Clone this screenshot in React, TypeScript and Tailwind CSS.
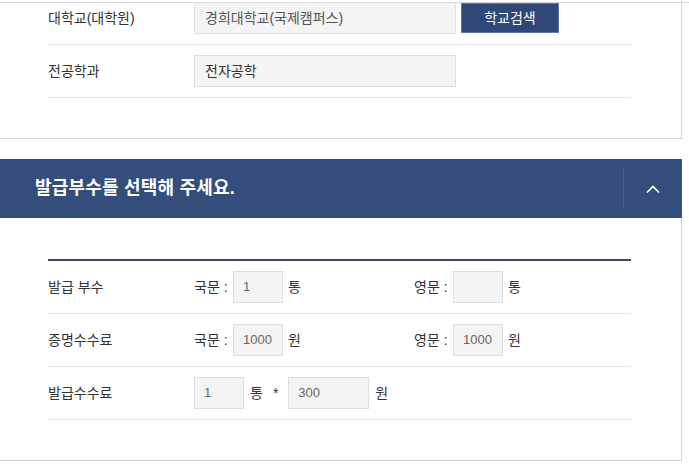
import React from 'react';

const font = { fontFamily: '"Liberation Sans", "Noto Sans CJK KR", sans-serif' };

const Field: React.FC<{ value?: string; w: string; dark?: boolean }> = ({ value, w, dark }) => (
    <div
        className={`${w} h-[32px] flex items-center pl-[9px] bg-[#f4f4f4] border border-[#dedede] text-[13px] ${dark ? 'text-[#333]' : 'text-[#666]'}`}
    >
        {value}
    </div>
);

const Row: React.FC<{ label: string; first?: boolean; children: React.ReactNode }> = ({ label, first, children }) => (
    <div className={`flex items-center border-b border-[#e6e6e6] ${first ? 'pt-[2px] pb-[10px]' : 'py-[10px]'}`}>
        <div className="w-[146px] text-[14px] text-[#333] leading-none">{label}</div>
        <div className="flex items-center text-[14px] text-[#333]">{children}</div>
    </div>
);

export default function App() {
    return (
        <div className="relative w-[689px] h-[470px] bg-white overflow-hidden" style={font}>
            {/* fixed header edge from the page above */}
            <div className="absolute top-[2px] left-0 right-0 h-px bg-[#d9d9d9]" />

            <div className="w-[682px]">
                {/* school info card */}
                <div className="border-r border-b border-[#d6d6d6] pl-[48px] pr-[50px] pb-[40px]">
                    <Row label="대학교(대학원)" first>
                        <div className="w-[262px] h-[32px] flex items-center pl-[10px] bg-[#f4f4f4] border border-[#dedede] text-[14px] text-[#555]">
                            경희대학교(국제캠퍼스)
                        </div>
                        <button className="ml-[5px] w-[98px] h-[30px] bg-[#2f4878] border border-[#5676ae] text-white text-[14px]">
                            학교검색
                        </button>
                    </Row>
                    <Row label="전공학과">
                        <div className="w-[262px] h-[32px] flex items-center pl-[10px] bg-[#f4f4f4] border border-[#dedede] text-[14px] text-[#333]">
                            전자공학
                        </div>
                    </Row>
                </div>

                {/* accordion header */}
                <div className="mt-[20px] h-[59px] bg-[#344d7b] flex items-center pl-[35px]">
                    <h2 className="flex-1 text-white text-[18px] font-bold tracking-[0.2px]">발급부수를 선택해 주세요.</h2>
                    <div className="w-[59px] h-[40px] border-l border-[#4a618c] flex items-center justify-center">
                        <svg width="14" height="8" viewBox="0 0 14 8" fill="none">
                            <polyline points="1,7.5 7,1.5 13,7.5" stroke="white" strokeWidth="1.6" />
                        </svg>
                    </div>
                </div>

                {/* copies card */}
                <div className="border-r border-b border-[#d6d6d6] pl-[48px] pr-[50px] pt-[41px] pb-[40px]">
                    <div className="h-[2px] bg-[#3b4a62]" />
                    <Row label="발급 부수">
                        <div className="w-[220px] flex items-center">
                            <span className="w-[39px]">국문 :</span>
                            <Field w="w-[50px]" value="1" />
                            <span className="ml-[5px]">통</span>
                        </div>
                        <span className="w-[39px]">영문 :</span>
                        <Field w="w-[50px]" />
                        <span className="ml-[5px]">통</span>
                    </Row>
                    <Row label="증명수수료">
                        <div className="w-[220px] flex items-center">
                            <span className="w-[39px]">국문 :</span>
                            <Field w="w-[50px]" value="1000" />
                            <span className="ml-[5px]">원</span>
                        </div>
                        <span className="w-[39px]">영문 :</span>
                        <Field w="w-[50px]" value="1000" />
                        <span className="ml-[5px]">원</span>
                    </Row>
                    <Row label="발급수수료">
                        <Field w="w-[50px]" value="1" />
                        <span className="ml-[6px]">통</span>
                        <span className="ml-[10px]">*</span>
                        <Field w="w-[81px] ml-[10px]" value="300" />
                        <span className="ml-[6px]">원</span>
                    </Row>
                </div>
            </div>
        </div>
    );
}
